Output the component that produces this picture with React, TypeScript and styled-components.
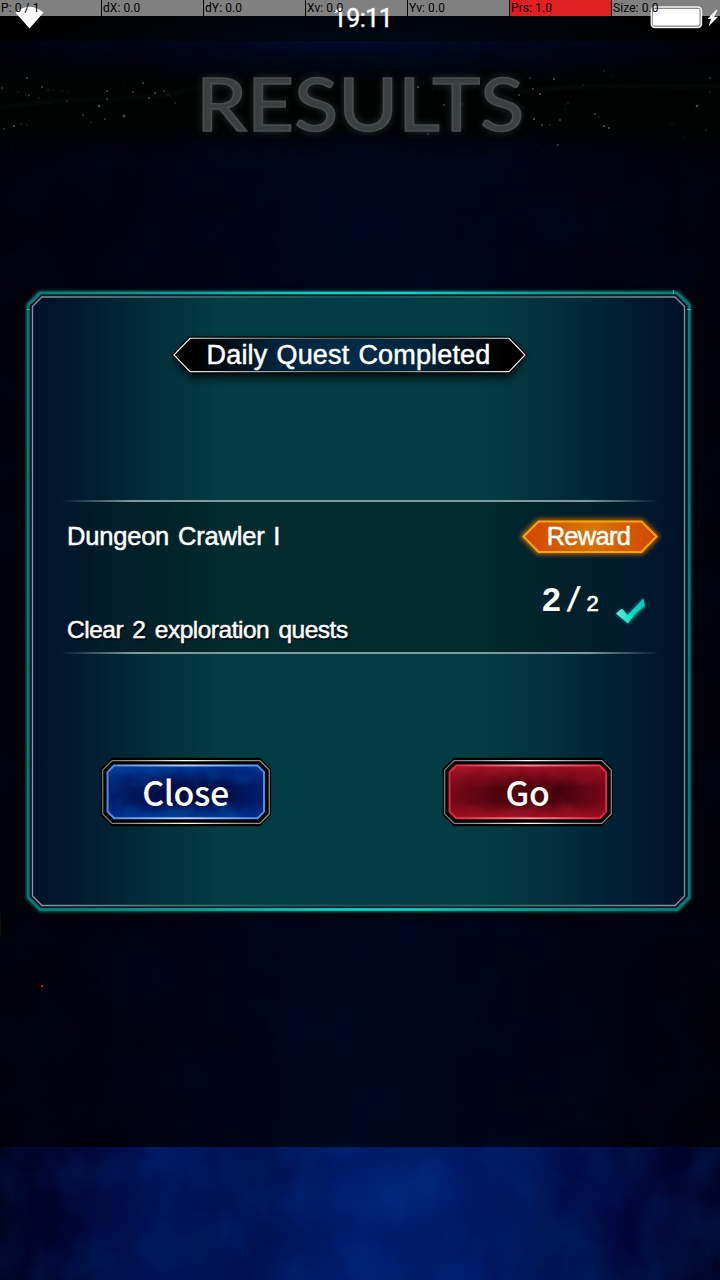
import React from "react";
import styled, { createGlobalStyle } from "styled-components";

const GlobalStyle = createGlobalStyle`
  * { box-sizing: border-box; }
  body { margin: 0; background: #000; overflow: hidden; }
`;

const Screen = styled.div`
  position: relative;
  isolation: isolate;
  display: flex;
  flex-direction: column;
  width: 720px;
  height: 1280px;
  overflow: hidden;
  background: #000;
  color: #fff;
  font-family: "Liberation Sans", Arial, sans-serif;
  font-weight: 400;
`;

const Backdrop = styled.svg`
  position: absolute;
  inset: 0;
  z-index: -1;
`;

const Top = styled.div`
  position: relative;
  height: 41px;
  flex: none;
`;

const PointerBar = styled.div`
  display: grid;
  grid-template-columns: repeat(6, 102px) 1fr;
  height: 16px;
  color: #000;
  font: 400 12px/16px Roboto, sans-serif;
`;

const PointerCell = styled.span`
  position: relative;
  z-index: 2;
  padding-left: 1px;
  white-space: pre;
  letter-spacing: 0.08px;
  border-right: 1px solid #000;
  &:last-child { border-right: 0; }
`;

const PointerTint = styled.div`
  position: absolute;
  inset: 0 0 auto 0;
  height: 16px;
  background: linear-gradient(90deg, #808080 510px, #e02020 510px, #e02020 611px, #808080 611px);
`;

const Status = styled.div`
  position: absolute;
  z-index: 1;
  inset: 0;
  display: flex;
  align-items: flex-start;
  justify-content: space-between;
`;

const Wifi = styled.svg`
  margin-left: 14px;
`;

const Clock = styled.span`
  margin: 4px 0 0 31px;
  font: 400 25px/29px Roboto, sans-serif;
  letter-spacing: -0.6px;
  -webkit-text-stroke: 0.4px #fff;
`;

const Battery = styled.svg`
  flex: none;
`;

const TitleBand = styled.header`
  position: relative;
  display: flex;
  justify-content: center;
  height: 119px;
  margin-bottom: 131px;
  flex: none;
`;

const Sparkles = styled.svg`
  position: absolute;
  inset: 0;
`;

const Title = styled.h1`
  position: relative;
  margin: 17px 0 0;
  font: 400 74px/90px Lato, sans-serif;
  color: #3a4042;
  transform: scaleX(1.1);
  -webkit-text-stroke: 1.6px #4b4b4b;
  text-shadow: 0 0 8px rgba(70, 95, 90, 0.6);
`;

const Dialog = styled.section`
  position: relative;
  isolation: isolate;
  display: flex;
  flex-direction: column;
  width: 664px;
  height: 621px;
  margin-left: 26px;
  padding: 46px 30px 0 34px;
  flex: none;
`;

const Frame = styled.svg`
  position: absolute;
  left: 0;
  top: 0;
  z-index: -1;
  overflow: visible;
`;

const Plate = styled.div<{ $w: number; $h: number; $lh: number }>`
  position: relative;
  isolation: isolate;
  display: flex;
  justify-content: center;
  width: ${(p) => p.$w}px;
  height: ${(p) => p.$h}px;
  line-height: ${(p) => p.$lh}px;
  white-space: nowrap;
  -webkit-text-stroke: 0.5px #fff;
`;

const Heading = styled(Plate)`
  margin: 0 0 126px 112px;
  padding-right: 3px;
  font-size: 27px;
  letter-spacing: 0.15px;
  word-spacing: 1.5px;
`;

const QuestList = styled.div`
  display: flex;
  justify-content: space-between;
  height: 154px;
  padding: 20px 2px 0 7px;
  background:
    linear-gradient(90deg, transparent, rgba(140, 165, 170, 0.9) 12%, rgba(140, 165, 170, 0.9) 88%, transparent) 0 0 / 100% 2px no-repeat,
    linear-gradient(90deg, transparent, rgba(140, 165, 170, 0.9) 12%, rgba(140, 165, 170, 0.9) 88%, transparent) 0 100% / 100% 2px no-repeat,
    linear-gradient(90deg, transparent, rgba(0, 0, 0, 0.3) 16%, rgba(0, 0, 0, 0.3) 84%, transparent);
`;

const QuestText = styled.div`
  display: flex;
  flex-direction: column;
  gap: 62px;
  font-size: 25.5px;
  line-height: 32px;
  white-space: nowrap;
  -webkit-text-stroke: 0.5px #fff;
`;

const QuestName = styled.span`
  letter-spacing: -0.2px;
  word-spacing: 2px;
`;

const QuestGoal = styled.span`
  font-size: 24.5px;
  letter-spacing: -0.5px;
  word-spacing: 3px;
  text-shadow: 1px 2px 1px #000;
`;

const QuestSide = styled.div`
  display: flex;
  flex-direction: column;
`;

const Reward = styled(Plate)`
  padding-right: 3px;
  font-size: 25.5px;
  letter-spacing: -0.7px;
`;

const Progress = styled.div`
  display: flex;
  align-items: baseline;
  height: 60px;
  margin: 25px 0 0 20px;
  line-height: 40px;
`;

const Done = styled.span`
  font-size: 34px;
  font-weight: 700;
`;

const Slash = styled.span`
  display: inline-block;
  margin-left: 8px;
  font-size: 34px;
  transform: skewX(-9deg);
  -webkit-text-stroke: 0.5px #fff;
`;

const Total = styled.span`
  margin-left: 8px;
  font-size: 22px;
  -webkit-text-stroke: 0.7px #fff;
`;

const Check = styled.svg`
  align-self: flex-start;
  margin: 18px 0 0 15px;
  overflow: visible;
`;

const Actions = styled.div`
  display: flex;
  justify-content: space-between;
  margin: 103px 46px 0 40px;
`;

const ActionButton = styled.button`
  position: relative;
  isolation: isolate;
  width: 172px;
  height: 70px;
  padding: 0 1px 0 0;
  border: 0;
  background: none;
  color: #fff;
  font: 500 34px/70px "Noto Sans CJK JP", "Noto Sans", sans-serif;
  letter-spacing: -0.4px;
`;

const oct = (x0: number, y0: number, x1: number, y1: number, c: number) =>
  `M${x0 + c} ${y0}H${x1 - c}L${x1} ${y0 + c}V${y1 - c}L${x1 - c} ${y1}H${x0 + c}L${x0} ${y1 - c}V${y0 + c}Z`;

const leftDots = [[2,88,.9],[26,95,.7],[29,95.5,.9],[18,92,.7],[27,78,.9],[9,86,.5],[42,87,1],[48,90,.8],[34,87,.5],[53,90,.5],[39,98,.7],[50,97,.6],[62,91,.7],[68,92,.6],[67,101,.8],[99,106,1.3],[107,91,1.1],[107,99,.9],[83,115,.9],[91,122,.8],[105,119,.9],[124,116,1.4],[133,92,.9],[143,83,1],[123,86,.6],[149,98,.9],[155,93,1],[164,91,.9],[168,95,.7],[171,97,.6],[175,103,.8],[14,126,1.1],[4,129,.9],[21,124,.8],[27,125,.7],[29,120,.5],[12,146,.5]];
const rightDots = [[418,87,1.1],[410,100,1.1],[444,105,.9],[462,104,.8],[433,89,.6],[437,130,.7],[428,134,.9],[530,78,.9],[554,79,1.1],[533,89,1],[540,94,1.2],[519,95,1],[583,85,.7],[604,71,.8],[613,76,.6],[534,119,1.2],[542,125,1],[550,125,.8],[560,120,1],[565,109,.7],[568,103,.8],[595,114,1],[599,117,.8],[604,126,1.1],[609,128,1.1],[558,145,.9],[697,106,1.3],[710,78,.9],[710,92,.7],[706,130,.7],[672,124,.7],[683,137,.6],[543,150,.5],[523,108,.6]];

const Background = () => (
  <Backdrop width="720" height="1280">
    <defs>
      <linearGradient id="side">
        <stop offset="0" stopColor="#000008" /><stop offset=".25" stopColor="#000112" />
        <stop offset=".5" stopColor="#00061b" /><stop offset=".75" stopColor="#000213" /><stop offset="1" stopColor="#000006" />
      </linearGradient>
      <linearGradient id="foot">
        <stop offset="0" stopColor="#00021d" /><stop offset=".08" stopColor="#00052e" /><stop offset=".22" stopColor="#001056" />
        <stop offset=".37" stopColor="#001252" /><stop offset=".47" stopColor="#001a68" /><stop offset=".6" stopColor="#001b6a" />
        <stop offset=".72" stopColor="#00145a" /><stop offset=".83" stopColor="#00083f" /><stop offset="1" stopColor="#000222" />
      </linearGradient>
      <radialGradient id="glow"><stop stopColor="#00348c" stopOpacity=".75" /><stop offset="1" stopColor="#00348c" stopOpacity="0" /></radialGradient>
      <linearGradient id="bandShade" x2="0" y2="1">
        <stop offset="0" stopColor="#000" stopOpacity="0" /><stop offset=".35" stopColor="#000201" stopOpacity=".95" />
        <stop offset=".72" stopColor="#000201" stopOpacity=".95" /><stop offset="1" stopColor="#000" stopOpacity="0" />
      </linearGradient>
      <filter id="mist" x="0" y="0" width="100%" height="100%">
        <feTurbulence type="fractalNoise" baseFrequency=".018 .016" numOctaves="6" seed="8" />
        <feColorMatrix values="0 0 0 0 0  0 0 0 0 .08  0 0 0 0 .48  2.4 0 0 0 -.95" />
      </filter>
      <filter id="dark" x="0" y="0" width="100%" height="100%">
        <feTurbulence type="fractalNoise" baseFrequency=".016 .01" numOctaves="6" seed="3" />
        <feColorMatrix values="0 0 0 0 0  0 0 0 0 .02  0 0 0 0 .12  2.6 0 0 0 -1.1" />
      </filter>
    </defs>
    <rect y="41" width="720" height="1106" fill="url(#side)" />
    <rect y="41" width="720" height="1106" filter="url(#mist)" opacity=".045" />
    <ellipse cx="360" cy="45" rx="330" ry="60" fill="url(#glow)" opacity=".18" />
    <rect y="41" width="720" height="119" fill="url(#bandShade)" />
    <rect y="1147" width="720" height="133" fill="url(#foot)" />
    <ellipse cx="400" cy="1192" rx="75" ry="42" fill="url(#glow)" opacity=".6" />
    <rect y="1147" width="720" height="133" filter="url(#mist)" opacity=".16" />
    <rect y="1147" width="720" height="133" filter="url(#dark)" opacity=".35" />
    <rect x="41" y="985" width="2" height="2" fill="#f00010" />
    <rect x="0" y="914" width="1" height="22" fill="#0c0d04" />
  </Backdrop>
);

const PanelFrame = () => (
  <Frame width="664" height="621" viewBox="26 291 664 621">
    <defs>
      <linearGradient id="panelFill">
        <stop offset="0" stopColor="#001028" /><stop offset=".06" stopColor="#01182c" /><stop offset=".18" stopColor="#022c38" />
        <stop offset=".29" stopColor="#033d44" /><stop offset=".69" stopColor="#033d44" /><stop offset=".82" stopColor="#022b39" />
        <stop offset=".94" stopColor="#01182e" /><stop offset="1" stopColor="#001028" />
      </linearGradient>
      <linearGradient id="cyan" gradientUnits="userSpaceOnUse" x1="28" x2="689" y1="0" y2="0">
        <stop offset="0" stopColor="#067a76" /><stop offset=".2" stopColor="#079a90" /><stop offset=".45" stopColor="#06d8c5" />
        <stop offset=".58" stopColor="#06d8c5" /><stop offset=".8" stopColor="#079a90" /><stop offset="1" stopColor="#067a76" />
      </linearGradient>
      <linearGradient id="innerLine" gradientUnits="userSpaceOnUse" x1="32" x2="685" y1="0" y2="0">
        <stop offset="0" stopColor="#8c91a2" /><stop offset=".25" stopColor="#496a73" /><stop offset=".5" stopColor="#1d5057" />
        <stop offset=".75" stopColor="#496a73" /><stop offset="1" stopColor="#8c91a2" />
      </linearGradient>
      <filter id="soft" x="-5%" y="-5%" width="110%" height="110%"><feGaussianBlur stdDeviation="1.6" /></filter>
      <filter id="shade" x="-5%" y="-20%" width="110%" height="150%"><feGaussianBlur stdDeviation="4" /></filter>
    </defs>
    <path d={oct(26, 293, 691, 918, 14)} fill="#000" filter="url(#shade)" opacity=".8" />
    <path d={oct(28.5, 293, 689, 910, 12)} fill="url(#panelFill)" />
    <path d={oct(28, 292.8, 689.2, 910, 12)} fill="none" stroke="#08a196" strokeWidth="3.6" filter="url(#soft)" opacity=".75" />
    <path d={oct(28.3, 293, 689, 909.5, 12)} fill="none" stroke="url(#cyan)" strokeWidth="2.5" />
    <path d={oct(30.5, 295.2, 686.8, 907.2, 11)} fill="none" stroke="#001620" strokeWidth="1.6" />
    <path d={oct(32.5, 297, 684.5, 905.5, 9.5)} fill="none" stroke="url(#innerLine)" strokeWidth="1.3" />
    <path d="M673.5 290V294M26.5 309.5H30M687 309.5H691" stroke="#0ac4b4" strokeWidth="1" />
  </Frame>
);

const HeadingPlate = () => (
  <Frame width="356" height="37" viewBox="172 337 356 37">
    <defs>
      <linearGradient id="plateFill">
        <stop offset="0" stopColor="#000" /><stop offset=".06" stopColor="#000" /><stop offset=".3" stopColor="#01253c" />
        <stop offset=".5" stopColor="#002c48" /><stop offset=".7" stopColor="#01253c" /><stop offset=".94" stopColor="#000" /><stop offset="1" stopColor="#000" />
      </linearGradient>
      <linearGradient id="plateLine">
        <stop offset="0" stopColor="#fff" /><stop offset=".2" stopColor="#b5b0aa" /><stop offset=".5" stopColor="#6e695c" />
        <stop offset=".8" stopColor="#b5b0aa" /><stop offset="1" stopColor="#fff" />
      </linearGradient>
    </defs>
    <path d="M174 359L190 342H509L525 359L509 378H190Z" fill="#000" opacity=".8" filter="url(#shade)" />
    <path d="M174 355L190 338.3H509L525 355L509 371.6H190Z" fill="#000" stroke="#000" strokeWidth="3.4" />
    <path d="M174 355L190 338.3H509L525 355L509 371.6H190Z" fill="url(#plateFill)" stroke="url(#plateLine)" strokeWidth="1.1" />
  </Frame>
);

const RewardPlate = () => (
  <Frame width="136" height="34" viewBox="522 519.5 136 34">
    <defs>
      <radialGradient id="orange" gradientUnits="userSpaceOnUse" cx="592" cy="532" r="66">
        <stop offset="0" stopColor="#d67a08" /><stop offset=".5" stopColor="#d25e04" /><stop offset="1" stopColor="#d44600" />
      </radialGradient>
      <filter id="rewardGlow" x="-10%" y="-30%" width="120%" height="160%"><feGaussianBlur stdDeviation="2.6" /></filter>
    </defs>
    <path d="M523.5 536L538.5 521H641.5L656.5 536L641.5 551.5H538.5Z" fill="none" stroke="#f07000" strokeWidth="4" filter="url(#rewardGlow)" />
    <path d="M523.5 536L538.5 521H641.5L656.5 536L641.5 551.5H538.5Z" fill="url(#orange)" stroke="#f5a800" strokeWidth="2" />
  </Frame>
);

type Tone = { id: string; deep: string; mid: string; edge: string; shine: string; noise: string };
const blue: Tone = { id: "blue", deep: "#00083a", mid: "#002f94", edge: "#5288e0", shine: "#b4d0fa", noise: "0 0 0 0 0  0 0 0 0 .2  0 0 0 0 .5  2.4 0 0 0 -1" };
const red: Tone = { id: "red", deep: "#3c0008", mid: "#a00e20", edge: "#e42040", shine: "#f58a96", noise: "0 0 0 0 .5  0 0 0 0 .02  0 0 0 0 .06  2.4 0 0 0 -1" };

const ButtonArt = ({ tone }: { tone: Tone }) => (
  <Frame width="172" height="70">
    <defs>
      <linearGradient id={tone.id + "Fill"} x2="0" y2="1">
        <stop offset="0" stopColor={tone.mid} /><stop offset=".4" stopColor={tone.deep} />
        <stop offset=".68" stopColor={tone.deep} /><stop offset="1" stopColor={tone.mid} />
      </linearGradient>
      <linearGradient id={tone.id + "Side"}>
        <stop offset="0" stopColor={tone.mid} stopOpacity=".6" /><stop offset=".3" stopColor={tone.mid} stopOpacity=".2" />
        <stop offset=".7" stopColor={tone.mid} stopOpacity=".1" /><stop offset="1" stopColor={tone.mid} stopOpacity=".6" />
      </linearGradient>
      <linearGradient id={tone.id + "Edge"}>
        <stop offset="0" stopColor={tone.edge} /><stop offset=".5" stopColor={tone.shine} /><stop offset="1" stopColor={tone.edge} />
      </linearGradient>
      <linearGradient id={tone.id + "Silver"}>
        <stop offset="0" stopColor="#777" /><stop offset=".2" stopColor="#999" /><stop offset=".5" stopColor="#fff" />
        <stop offset=".8" stopColor="#999" /><stop offset="1" stopColor="#888" />
      </linearGradient>
      <filter id={tone.id + "Noise"} x="0" y="0" width="100%" height="100%">
        <feTurbulence type="fractalNoise" baseFrequency=".03 .04" numOctaves="3" seed="5" />
        <feColorMatrix values={tone.noise} />
      </filter>
    </defs>
    <path d={oct(0.7, 0.7, 171, 69.3, 11)} fill="#000" />
    <path d={oct(2.7, 3.6, 169.3, 66.4, 9.5)} fill="none" stroke={`url(#${tone.id}Silver)`} strokeWidth="1.3" />
    <path d={oct(6.8, 7.8, 164.8, 62, 7)} fill={`url(#${tone.id}Fill)`} />
    <path d={oct(6.8, 7.8, 164.8, 62, 7)} fill={`url(#${tone.id}Side)`} />
    <rect x="10" y="10" width="152" height="50" filter={`url(#${tone.id}Noise)`} opacity=".28" />
    <path d={oct(7.6, 8.6, 164, 61.2, 6.5)} fill="none" stroke={`url(#${tone.id}Edge)`} strokeWidth="2" />
  </Frame>
);

const readings = ["P: 0 / 1", "dX: 0.0", "dY: 0.0", "Xv: 0.0", "Yv: 0.0", "Prs: 1.0", "Size: 0.0"];

export default function App() {
  return (
    <Screen>
      <GlobalStyle />
      <Background />
      <Top>
        <PointerTint />
        <PointerBar>
          {readings.map((r) => <PointerCell key={r}>{r}</PointerCell>)}
        </PointerBar>
        <Status>
          <Wifi width="32" height="30"><path d="M1.5 12.5Q15.5 1 29.5 12.5L15.5 28.5Z" fill="#fff" /></Wifi>
          <Clock>19:11</Clock>
          <Battery width="72" height="32">
            <rect x="3.4" y="7" width="50" height="20.5" rx="3.5" fill="#888" stroke="#eee" strokeWidth="1.6" />
            <rect x="5" y="9" width="46.5" height="16.5" rx="1" fill="#fff" />
            <path d="M68.5 9.5L59.5 19H63L60.5 26.5L70 16.8H66.2L69.5 10Z" fill="#fff" />
          </Battery>
        </Status>
      </Top>
      <TitleBand>
        <Sparkles width="720" height="119" viewBox="0 41 720 119">
          <path d="M0 108C90 92 110 108 200 88M520 92C590 82 650 88 720 86" stroke="#050a08" strokeWidth="5" fill="none" opacity=".6" />
          {[...leftDots, ...rightDots].map(([x, y, r], i) => (
            <circle key={i} cx={x} cy={y} r={r} fill="#3d5453" opacity={Math.min(1, r * 0.9)} />
          ))}
        </Sparkles>
        <Title>RESULTS</Title>
      </TitleBand>
      <Dialog>
        <PanelFrame />
        <Heading $w={356} $h={37} $lh={36}><HeadingPlate />Daily Quest Completed</Heading>
        <QuestList>
          <QuestText>
            <QuestName>Dungeon Crawler I</QuestName>
            <QuestGoal>Clear 2 exploration quests</QuestGoal>
          </QuestText>
          <QuestSide>
            <Reward $w={136} $h={34} $lh={33}><RewardPlate />Reward</Reward>
            <Progress>
              <Done>2</Done><Slash>/</Slash><Total>2</Total>
              <Check width="32" height="28" viewBox="614 597 32 28">
                <defs>
                  <linearGradient id="tick"><stop offset="0" stopColor="#6ff0dc" /><stop offset=".5" stopColor="#0ce0c8" /><stop offset="1" stopColor="#08c8b6" /></linearGradient>
                  <filter id="tickGlow" x="-20%" y="-20%" width="140%" height="140%"><feGaussianBlur stdDeviation="1.6" /></filter>
                </defs>
                <path d="M616 613.5L621.5 609L627.5 614.5L643.5 598.5L645 606L628 623.5Z" fill="#08a89c" filter="url(#tickGlow)" />
                <path d="M616 613.5L621.5 609L623 609.5L627.5 615.5L643.5 598.5L644.8 606L636 612.5L628 623.5Z" fill="url(#tick)" />
              </Check>
            </Progress>
          </QuestSide>
        </QuestList>
        <Actions>
          <ActionButton><ButtonArt tone={blue} />Close</ActionButton>
          <ActionButton><ButtonArt tone={red} />Go</ActionButton>
        </Actions>
      </Dialog>
    </Screen>
  );
}
